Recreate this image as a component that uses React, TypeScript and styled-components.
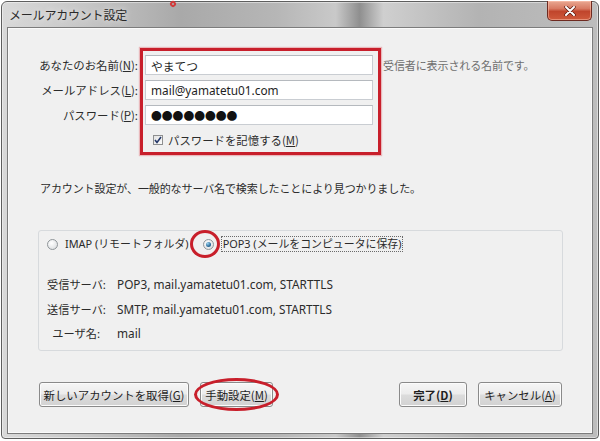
import React from "react";
import styled, { createGlobalStyle } from "styled-components";

const GlobalStyle = createGlobalStyle`
  html, body { margin: 0; padding: 0; background: #ffffff; }
  body {
    font-family: "Noto Sans", "Noto Sans CJK JP", sans-serif;
    font-size: 11px;
    color: #2b2b2b;
  }
  * { box-sizing: border-box; }
`;

const Window = styled.div`
  margin: 1px 0 0 1px;
  width: 598px;
  height: 438px;
  border: 1px solid #5e5e5e;
  border-radius: 6px 6px 4px 4px;
  background: linear-gradient(
    to right,
    #d9d9d9 0%,
    #c6c6c6 14%,
    #a9a9a9 30%,
    #b6b6b6 46%,
    #c9c9c9 56%,
    #8f8f8f 60%,
    #cfcfcf 64%,
    #b3b3b3 80%,
    #bdbdbd 100%
  );
  padding: 0 5px 4px 5px;
  display: flex;
  flex-direction: column;
  box-shadow: inset 0 0 0 1px rgba(255, 255, 255, 0.45);
`;

const TitleBar = styled.div`
  position: relative;
  height: 25px;
  display: flex;
  align-items: center;
  padding-left: 2px;
`;

const Title = styled.span`
  font-family: "Noto Sans CJK JP", sans-serif;
  font-size: 12px;
  color: #2a2a2a;
  letter-spacing: -0.2px;
  text-shadow: 0 0 6px rgba(255, 255, 255, 0.9);
`;

const Marker = styled.span`
  position: absolute;
  left: 163px;
  top: -1px;
  width: 6px;
  height: 6px;
  border: 2px solid #d23a3a;
  border-radius: 50%;
  transform: rotate(45deg);
`;

const CloseButton = styled.div`
  position: absolute;
  right: 1px;
  top: -1px;
  width: 45px;
  height: 20px;
  border: 1px solid #6e2a20;
  border-top: none;
  border-radius: 0 0 5px 5px;
  background: linear-gradient(to bottom, #e9a892 0%, #d87a62 40%, #c0452c 55%, #cf5a3c 100%);
  display: flex;
  align-items: center;
  justify-content: center;
  box-shadow: inset 0 0 0 1px rgba(255, 200, 180, 0.5);
`;

const Client = styled.div`
  flex: 1;
  border: 1px solid #7c7c7c;
  background: #f0f0f0;
  display: flex;
  flex-direction: column;
  box-shadow: inset 0 0 0 1px #fafafa;
`;

const FormArea = styled.div`
  position: relative;
  padding-top: 27px;
`;

const FormGrid = styled.div`
  display: grid;
  grid-template-columns: 130px 228px auto;
  grid-auto-rows: 20px;
  column-gap: 7px;
  row-gap: 5px;
  align-items: center;
`;

const Label = styled.label`
  font-family: "Noto Sans CJK JP", sans-serif;
  font-size: 11.4px;
  text-align: right;
  white-space: nowrap;
  color: #2b2b2b;
`;

const Field = styled.input`
  width: 228px;
  height: 20px;
  border: 1px solid #c9cdd2;
  border-top-color: #b5b9be;
  background: #ffffff;
  padding: 0 5px;
  font-family: "Noto Sans", "Noto Sans CJK JP", sans-serif;
  font-size: 11.8px;
  color: #1e1e1e;
  outline: none;
`;

const PasswordField = styled(Field)`
  font-family: "Noto Sans CJK JP", sans-serif;
  font-size: 10.8px;
  letter-spacing: 0px;
  color: #111;
`;

const Hint = styled.span`
  font-family: "Noto Sans CJK JP", sans-serif;
  font-size: 11px;
  color: #6e6e6e;
  margin-left: 3px;
  letter-spacing: -0.1px;
  white-space: nowrap;
`;

const CheckRow = styled.div`
  grid-column: 2 / span 2;
  height: 16px;
  display: flex;
  align-items: center;
  gap: 5px;
  padding-left: 8px;
  font-family: "Noto Sans CJK JP", sans-serif;
  font-size: 11.4px;
`;

const CheckBox = styled.span`
  width: 10px;
  height: 10px;
  border: 1px solid #8e8f8f;
  background: linear-gradient(135deg, #e3e3e3, #fbfbfb);
  display: flex;
  align-items: center;
  justify-content: center;
`;

const Annotation = styled.div`
  position: absolute;
  left: 132px;
  top: 20px;
  width: 241px;
  height: 107px;
  border: 3px solid #c81f2b;
  box-shadow: 0 0 1px 1px rgba(220, 80, 90, 0.35);
  pointer-events: none;
`;

const Message = styled.p`
  margin: 30px 0 0 32px;
  height: 16px;
  line-height: 16px;
  font-family: "Noto Sans CJK JP", sans-serif;
  font-size: 11px;
  letter-spacing: -0.1px;
  white-space: nowrap;
`;

const GroupBox = styled.div`
  margin: 34px 0 0 30px;
  width: 525px;
  height: 121px;
  border: 1px solid #d7dadd;
  border-radius: 3px;
  padding: 5px 0 0 8px;
`;

const RadioRow = styled.div`
  display: flex;
  align-items: center;
  height: 16px;
`;

const RadioOption = styled.div<{ $gap: number; $offset?: number }>`
  position: relative;
  display: flex;
  align-items: center;
  gap: ${(p) => p.$gap}px;
  margin-left: ${(p) => p.$offset ?? 0}px;
`;

const Radio = styled.span<{ $checked?: boolean }>`
  position: relative;
  width: 11px;
  height: 11px;
  border-radius: 50%;
  border: 1px solid #8f9599;
  background: radial-gradient(circle at 40% 35%, #ffffff 0%, #e2e4e6 70%, #cfd2d4 100%);
  display: flex;
  align-items: center;
  justify-content: center;
  &::after {
    content: "";
    display: ${(p) => (p.$checked ? "block" : "none")};
    width: 5px;
    height: 5px;
    border-radius: 50%;
    background: radial-gradient(circle at 35% 30%, #9fd3f0 0%, #2a6d9b 60%, #1b4a6e 100%);
  }
`;

const RadioText = styled.span<{ $focus?: boolean }>`
  font-family: "Noto Sans", "Noto Sans CJK JP", sans-serif;
  font-size: 10.9px;
  padding: 0 1px;
  white-space: nowrap;
  border: 1px ${(p) => (p.$focus ? "dotted #6a6a6a" : "solid transparent")};
  line-height: 14px;
`;

const Circle = styled.span`
  position: absolute;
  left: -14px;
  top: -10px;
  width: 30px;
  height: 28px;
  border: 3px solid #c81f2b;
  border-radius: 50%;
  pointer-events: none;
`;

const InfoGrid = styled.div`
  margin-top: 24px;
  display: grid;
  grid-template-columns: 53px auto;
  grid-auto-rows: 24.5px;
  column-gap: 17px;
  align-items: start;
`;

const InfoLabel = styled.span`
  font-family: "Noto Sans CJK JP", sans-serif;
  font-size: 11.2px;
  text-align: right;
  white-space: nowrap;
  line-height: 16px;
`;

const InfoValue = styled.span`
  font-size: 11.8px;
  white-space: nowrap;
  line-height: 16px;
`;

const ButtonBar = styled.div`
  margin-top: 31px;
  padding: 0 30px 0 31px;
  display: flex;
  align-items: center;
  gap: 11px;
`;

const Spacer = styled.div`
  flex: 1;
`;

const Button = styled.button<{ $w: number; $bold?: boolean }>`
  position: relative;
  width: ${(p) => p.$w}px;
  height: 25px;
  border: 1px solid #8a8a8a;
  border-radius: 3px;
  background: linear-gradient(to bottom, #f6f6f6 0%, #ececec 48%, #dcdcdc 52%, #d2d2d2 100%);
  box-shadow: inset 0 0 0 1px #fcfcfc;
  font-family: "Noto Sans CJK JP", sans-serif;
  font-size: 11.4px;
  font-weight: ${(p) => (p.$bold ? 700 : 400)};
  color: #1e1e1e;
  padding: 0;
  white-space: nowrap;
`;

const Ellipse = styled.span`
  position: absolute;
  left: -7px;
  top: -5px;
  width: 85px;
  height: 33px;
  border: 3px solid #c81f2b;
  border-radius: 50%;
  pointer-events: none;
`;

const Mnemonic = styled.u`
  text-underline-offset: 1px;
`;

export default function App() {
  return (
    <>
      <GlobalStyle />
      <Window>
        <TitleBar>
          <Title>メールアカウント設定</Title>
          <Marker />
          <CloseButton>
            <svg width="12" height="10" viewBox="0 0 12 10">
              <path d="M2 1 L10 9 M10 1 L2 9" stroke="#5a1a10" strokeWidth="3.4" strokeLinecap="round" />
              <path d="M2 1 L10 9 M10 1 L2 9" stroke="#ffffff" strokeWidth="2" strokeLinecap="round" />
            </svg>
          </CloseButton>
        </TitleBar>
        <Client>
          <FormArea>
            <FormGrid>
              <Label>
                あなたのお名前(<Mnemonic>N</Mnemonic>):
              </Label>
              <Field readOnly defaultValue="やまてつ" />
              <Hint>受信者に表示される名前です。</Hint>

              <Label>
                メールアドレス(<Mnemonic>L</Mnemonic>):
              </Label>
              <Field readOnly defaultValue="mail@yamatetu01.com" />
              <span />

              <Label>
                パスワード(<Mnemonic>P</Mnemonic>):
              </Label>
              <PasswordField readOnly defaultValue="●●●●●●●●" />
              <span />

              <span />
              <CheckRow>
                <CheckBox>
                  <svg width="8" height="8" viewBox="0 0 8 8">
                    <path d="M1 4 L3 6.5 L7 1" fill="none" stroke="#24386a" strokeWidth="1.6" />
                  </svg>
                </CheckBox>
                <span>
                  パスワードを記憶する(<Mnemonic>M</Mnemonic>)
                </span>
              </CheckRow>
            </FormGrid>
            <Annotation />
          </FormArea>

          <Message>アカウント設定が、一般的なサーバ名で検索したことにより見つかりました。</Message>

          <GroupBox>
            <RadioRow>
              <RadioOption $gap={5}>
                <Radio />
                <RadioText>IMAP (リモートフォルダ)</RadioText>
              </RadioOption>
              <RadioOption $gap={7} $offset={12}>
                <Radio $checked>
                  <Circle />
                </Radio>
                <RadioText $focus>POP3 (メールをコンピュータに保存)</RadioText>
              </RadioOption>
            </RadioRow>
            <InfoGrid>
              <InfoLabel>受信サーバ:</InfoLabel>
              <InfoValue>POP3, mail.yamatetu01.com, STARTTLS</InfoValue>
              <InfoLabel>送信サーバ:</InfoLabel>
              <InfoValue>SMTP, mail.yamatetu01.com, STARTTLS</InfoValue>
              <InfoLabel>ユーザ名:</InfoLabel>
              <InfoValue>mail</InfoValue>
            </InfoGrid>
          </GroupBox>

          <ButtonBar>
            <Button $w={150}>
              新しいアカウントを取得(<Mnemonic>G</Mnemonic>)
            </Button>
            <Button $w={73}>
              手動設定(<Mnemonic>M</Mnemonic>)
              <Ellipse />
            </Button>
            <Spacer />
            <Button $w={68} $bold>
              完了(<Mnemonic>D</Mnemonic>)
            </Button>
            <Button $w={84}>
              キャンセル(<Mnemonic>A</Mnemonic>)
            </Button>
          </ButtonBar>
        </Client>
      </Window>
    </>
  );
}
